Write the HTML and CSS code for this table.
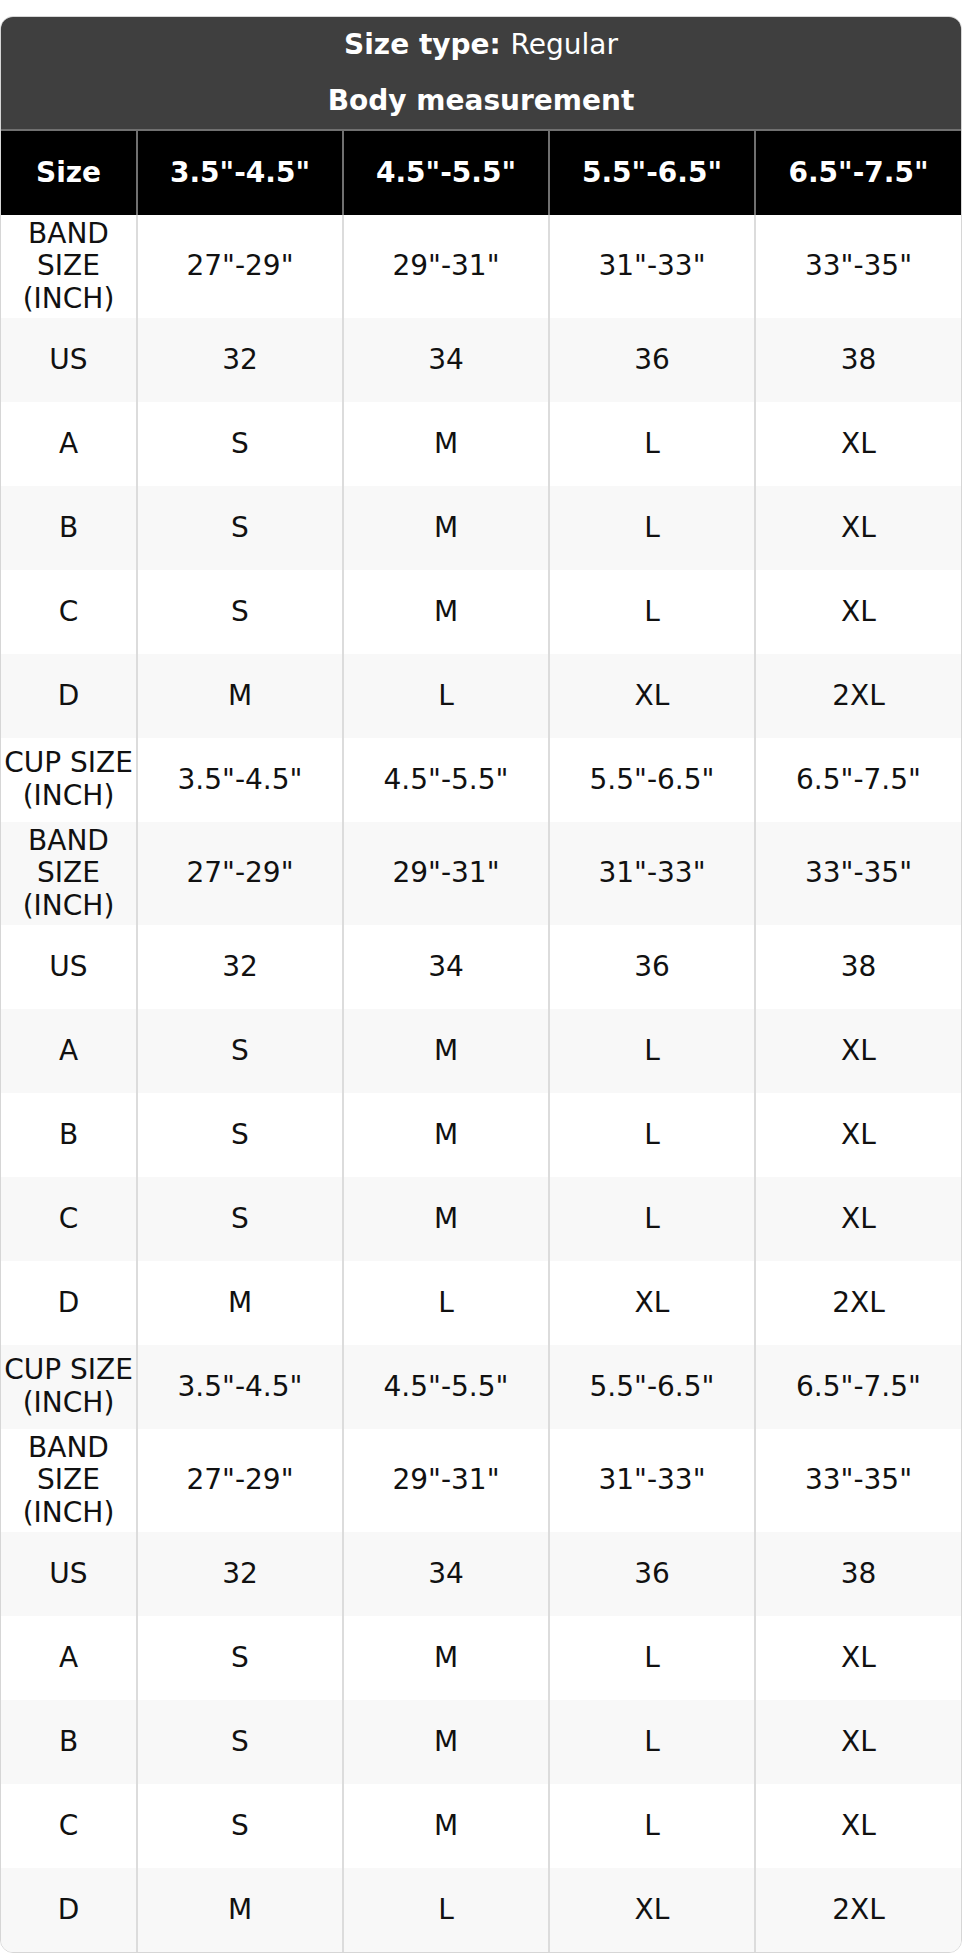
FILE: index.html
```html
<!DOCTYPE html>
<html lang="en">
<head>
<meta charset="utf-8">
<title>Size chart</title>
<link rel="stylesheet" href="styles.css">
</head>
<body>
<div class="chart">
<table class="size-table">
<colgroup>
<col class="c-first"><col class="c-val"><col class="c-val"><col class="c-val"><col class="c-val">
</colgroup>
<thead>
<tr class="title-row"><th colspan="5"><b>Size type:</b> <span class="reg">Regular</span></th></tr>
<tr class="title-row"><th colspan="5">Body measurement</th></tr>
<tr class="head-row"><th>Size</th><th>3.5"-4.5"</th><th>4.5"-5.5"</th><th>5.5"-6.5"</th><th>6.5"-7.5"</th></tr>
</thead>
<tbody>
<tr class="tall"><td>BAND<br>SIZE<br>(INCH)</td><td>27"-29"</td><td>29"-31"</td><td>31"-33"</td><td>33"-35"</td></tr>
<tr><td>US</td><td>32</td><td>34</td><td>36</td><td>38</td></tr>
<tr><td>A</td><td>S</td><td>M</td><td>L</td><td>XL</td></tr>
<tr><td>B</td><td>S</td><td>M</td><td>L</td><td>XL</td></tr>
<tr><td>C</td><td>S</td><td>M</td><td>L</td><td>XL</td></tr>
<tr><td>D</td><td>M</td><td>L</td><td>XL</td><td>2XL</td></tr>
<tr><td><span class="nw">CUP SIZE</span><br>(INCH)</td><td>3.5"-4.5"</td><td>4.5"-5.5"</td><td>5.5"-6.5"</td><td>6.5"-7.5"</td></tr>
<tr class="tall"><td>BAND<br>SIZE<br>(INCH)</td><td>27"-29"</td><td>29"-31"</td><td>31"-33"</td><td>33"-35"</td></tr>
<tr><td>US</td><td>32</td><td>34</td><td>36</td><td>38</td></tr>
<tr><td>A</td><td>S</td><td>M</td><td>L</td><td>XL</td></tr>
<tr><td>B</td><td>S</td><td>M</td><td>L</td><td>XL</td></tr>
<tr><td>C</td><td>S</td><td>M</td><td>L</td><td>XL</td></tr>
<tr><td>D</td><td>M</td><td>L</td><td>XL</td><td>2XL</td></tr>
<tr><td><span class="nw">CUP SIZE</span><br>(INCH)</td><td>3.5"-4.5"</td><td>4.5"-5.5"</td><td>5.5"-6.5"</td><td>6.5"-7.5"</td></tr>
<tr class="tall"><td>BAND<br>SIZE<br>(INCH)</td><td>27"-29"</td><td>29"-31"</td><td>31"-33"</td><td>33"-35"</td></tr>
<tr><td>US</td><td>32</td><td>34</td><td>36</td><td>38</td></tr>
<tr><td>A</td><td>S</td><td>M</td><td>L</td><td>XL</td></tr>
<tr><td>B</td><td>S</td><td>M</td><td>L</td><td>XL</td></tr>
<tr><td>C</td><td>S</td><td>M</td><td>L</td><td>XL</td></tr>
<tr><td>D</td><td>M</td><td>L</td><td>XL</td><td>2XL</td></tr>
</tbody>
</table>
</div>
</body>
</html>
```
FILE: styles.css
```css
html, body {
  margin: 0;
  padding: 0;
  background: #ffffff;
}
body {
  padding-top: 16px;
  font-family: "DejaVu Sans", Verdana, sans-serif;
  font-size: 28px;
  color: #111111;
}
.chart {
  width: 960px;
  border: 1px solid #d6d6d6;
  border-radius: 13px;
  overflow: hidden;
}
.size-table {
  width: 100%;
  border-collapse: collapse;
  table-layout: fixed;
}
.c-first { width: 136px; }
.c-val { width: 206px; }
.size-table th,
.size-table td {
  text-align: center;
  vertical-align: middle;
  padding: 0;
  line-height: 1.164;
}
.nw { white-space: nowrap; }
.title-row th {
  background: #3f3f3f;
  color: #ffffff;
  font-weight: bold;
  height: 56px;
}
.title-row .reg { font-weight: normal; }
.head-row th {
  background: #000000;
  color: #ffffff;
  font-weight: bold;
  height: 84px;
  border-top: 2px solid #707070;
  border-left: 2px solid #707070;
}
.head-row th:first-child { border-left: none; }
.size-table tbody tr { height: 84px; }
.size-table tbody tr.tall { height: 103px; }
.size-table tbody td {
  border-left: 2px solid #dcdcdc;
}
.size-table tbody td:first-child { border-left: none; }
.size-table tbody tr:nth-child(even) { background: #f8f8f8; }
.size-table tbody tr:nth-child(odd) { background: #ffffff; }
```
